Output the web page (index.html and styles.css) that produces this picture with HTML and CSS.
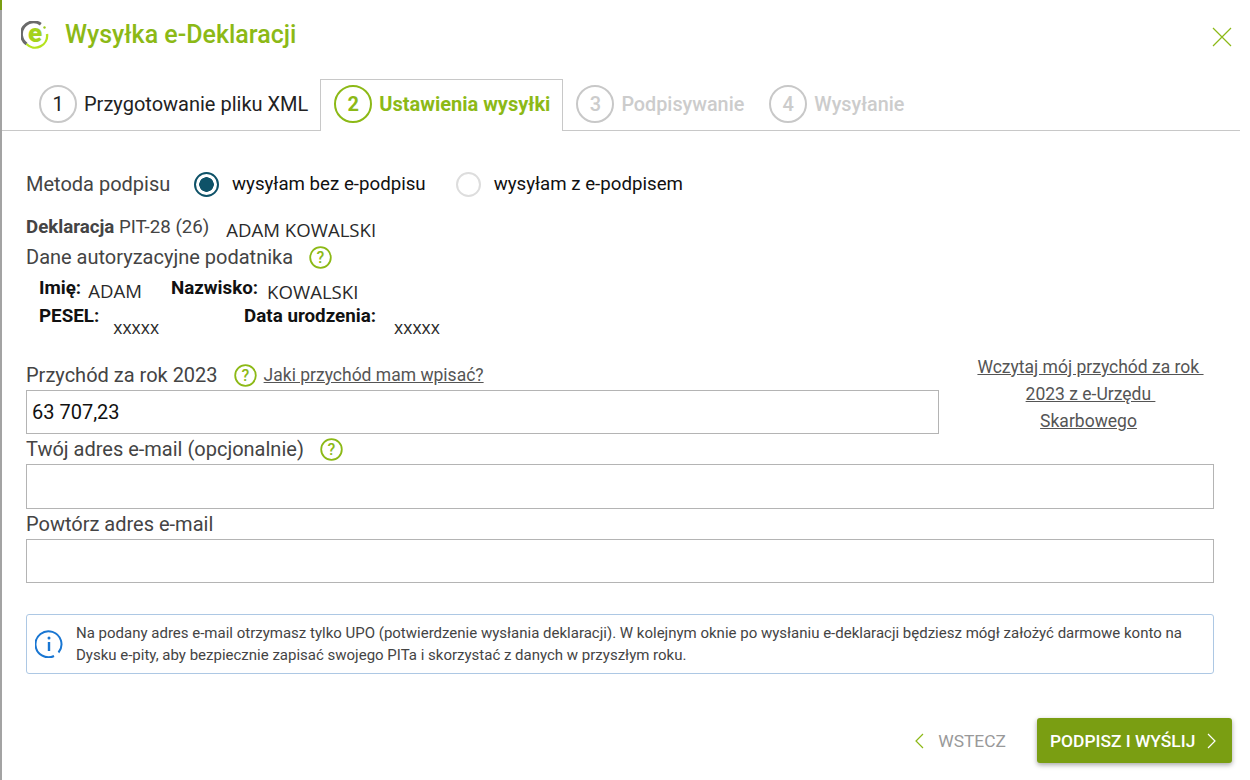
FILE: index.html
```html
<!DOCTYPE html>
<html lang="pl">
<head>
  <meta charset="UTF-8" />
  <title>Wysyłka e-Deklaracji</title>
  <link rel="stylesheet" href="styles.css">
</head>
<body>
  <div class="dialog">

    <div class="header">
      <div class="logo">
        <svg width="28" height="28" viewBox="0 0 28 28" fill="none">
          <path d="M19.800 3.200A12 12 0 1 0 5.500 23" stroke="#6a6a6a" stroke-width="3"/>
          <path d="M5.500 23A12 12 0 0 0 26 13" stroke="#b5e31e" stroke-width="2.400"/>
          <circle cx="23.500" cy="6.500" r="1.200" fill="#9ccb1e"/>
        </svg>
        <span class="logo-e">e</span>
      </div>
      <h1>Wysyłka e-Deklaracji</h1>
      <svg class="close" width="20" height="20" viewBox="0 0 20 20">
        <path d="M1 1l18 18M19 1L1 19" stroke="#8cb916" stroke-width="1.200"/>
      </svg>
    </div>

    <div class="tabs">
      <div class="tab done"><span class="num">1</span>Przygotowanie pliku XML</div>
      <div class="tab active"><span class="num">2</span>Ustawienia wysyłki</div>
      <div class="tab off"><span class="num">3</span>Podpisywanie</div>
      <div class="tab off"><span class="num">4</span>Wysyłanie</div>
    </div>

    <form class="content">
      <div class="method">
        <span class="method-label">Metoda podpisu</span>
        <span class="radio checked"></span>
        <span class="radio-text">wysyłam bez e-podpisu</span>
        <span class="radio"></span>
        <span class="radio-text">wysyłam z e-podpisem</span>
      </div>

      <div class="decl">
        <span><b>Deklaracja</b> PIT-28 (26)</span>
        <span class="pasted decl-name">ADAM KOWALSKI</span>
      </div>

      <div class="auth-title">
        Dane autoryzacyjne podatnika
        <svg class="help" viewBox="0 0 23 23"><circle cx="11.500" cy="11.500" r="10.300"/><text x="11.500" y="17">?</text></svg>
      </div>

      <div class="person">
        <div class="person-row first">
          <b class="f-name">Imię:</b><span class="pasted v-name">ADAM</span>
          <b class="f-surname">Nazwisko:</b><span class="pasted v-surname">KOWALSKI</span>
        </div>
        <div class="person-row second">
          <b class="f-pesel">PESEL:</b><span class="pasted small v-pesel">xxxxx</span>
          <b class="f-birth">Data urodzenia:</b><span class="pasted small v-birth">xxxxx</span>
        </div>
      </div>

      <div class="income">
        <div class="income-main">
          <label class="field-label first-label">
            Przychód za rok 2023
            <svg class="help" viewBox="0 0 23 23"><circle cx="11.500" cy="11.500" r="10.300"/><text x="11.500" y="17">?</text></svg>
            <a class="link what" href="#">Jaki przychód mam wpisać?</a>
          </label>
          <input class="text-input" type="text" value="63 707,23">
        </div>
        <div class="load">
          <a class="link load-line" href="#">Wczytaj mój przychód za rok&nbsp;</a><br>
          <a class="link load-line" href="#">2023 z e-Urzędu&nbsp;</a><br>
          <a class="link" href="#">Skarbowego</a>
        </div>
      </div>

      <label class="field-label email">
        Twój adres e-mail (opcjonalnie)
        <svg class="help" viewBox="0 0 23 23"><circle cx="11.500" cy="11.500" r="10.300"/><text x="11.500" y="17">?</text></svg>
      </label>
      <input class="text-input tall" type="text">

      <label class="field-label email">Powtórz adres e-mail</label>
      <input class="text-input" type="text">

      <div class="info">
        <svg class="info-icon" width="28" height="28" viewBox="0 0 28 28" fill="none">
          <path d="M23.500 22.500A13 13 0 1 0 19 26" stroke="#1976d2" stroke-width="2"/>
          <path d="M14 12v9" stroke="#1976d2" stroke-width="2.400"/>
          <circle cx="14" cy="8" r="1.500" fill="#1976d2"/>
        </svg>
        <p>Na podany adres e-mail otrzymasz tylko UPO (potwierdzenie wysłania deklaracji). W kolejnym oknie po wysłaniu e-deklaracji będziesz mógł założyć darmowe konto na Dysku e-pity, aby bezpiecznie zapisać swojego PITa i skorzystać z danych w przyszłym roku.</p>
      </div>
    </form>

    <div class="actions">
      <button type="button" class="btn-back">
        <svg width="9" height="16" viewBox="0 0 9 16" fill="none"><path d="M8 1L1 8l7 7" stroke="#8cb916" stroke-width="1.200"/></svg>
        WSTECZ
      </button>
      <button type="button" class="btn-next">
        PODPISZ I WYŚLIJ
        <svg width="9" height="16" viewBox="0 0 9 16" fill="none"><path d="M1 1l7 7-7 7" stroke="#fff" stroke-width="1.200"/></svg>
      </button>
    </div>

  </div>
</body>
</html>
```

FILE: styles.css
```css
:root {
  --zielony: #8cb916;
  --ziemny: #7a9e12;
  --szary-linia: #c8c8c8;
  --szary-input: #b4b4b4;
  --tekst: #444;
}

* {
  box-sizing: border-box;
}

html, body {
  margin: 0;
  height: 100%;
  background: white;
}

body {
  font-family: Roboto, sans-serif;
  color: var(--tekst);
  overflow: hidden;
}

.dialog {
  position: relative;
  width: 1240px;
  height: 780px;
  border-left: 2px solid #a3a3a3;
}

.dialog::before {
  content: "";
  position: absolute;
  left: -2px;
  top: 0;
  width: 2px;
  height: 10px;
  background: #7a9e12;
}

/* naglowek */
.header {
  display: flex;
  align-items: center;
  height: 70px;
  padding-left: 19px;
  padding-bottom: 1px;
}

.logo {
  position: relative;
  flex: none;
  width: 28px;
  height: 28px;
}

.logo svg {
  display: block;
}

.logo-e {
  position: absolute;
  left: 0;
  top: -3px;
  width: 28px;
  text-align: center;
  font-size: 26px;
  font-weight: 900;
  line-height: 30px;
  color: #a4d21c;
}

.header h1 {
  margin: 0 0 0 16px;
  font-size: 25px;
  font-weight: 500;
  color: var(--zielony);
}

.close {
  margin-left: auto;
  margin-right: 8px;
  margin-top: 4px;
}

/* zakladki */
.tabs {
  display: flex;
  height: 61px;
  padding-left: 18px;
  border-bottom: 1px solid var(--szary-linia);
}

.tab {
  display: flex;
  align-items: center;
  height: 52px;
  margin-top: 9px;
  padding: 0 12px 3px;
  border: 1px solid transparent;
  border-bottom: none;
  font-size: 20px;
  color: #222;
}

.tab.done {
  padding-left: 18px;
  padding-right: 11px;
}

.num {
  display: flex;
  align-items: center;
  justify-content: center;
  width: 38px;
  height: 38px;
  margin-right: 7px;
  border: 2px solid var(--szary-linia);
  border-radius: 50%;
  font-size: 20px;
}

.tab.active {
  position: relative;
  height: 52px;
  padding: 0 12px 3px 13px;
  background: white;
  border-color: var(--szary-linia);
  font-weight: 700;
  color: var(--zielony);
}

.tab.off {
  padding-right: 11px;
  font-size: 19.800px;
  font-weight: 500;
  color: #ccc;
}

.tab.active .num {
  border-color: var(--zielony);
}

/* formularz */
.content {
  padding: 0 26px 0 24px;
}

.method {
  display: flex;
  align-items: center;
  height: 26px;
  margin-top: 40px;
  font-size: 18.700px;
}

.method-label {
  width: 168px;
  font-size: 20px;
}

.radio {
  width: 25px;
  height: 25px;
  border: 2px solid #ddd;
  border-radius: 50%;
  margin-right: 13px;
}

.radio.checked {
  border-color: #0e5268;
  background: radial-gradient(circle, #0e5268 0 7px, white 7.500px);
}

.radio-text {
  margin-right: 30px;
  color: #111;
}

.decl {
  display: flex;
  height: 23px;
  margin-top: 19px;
  font-size: 18.700px;
}

.decl b {
  font-weight: 700;
}

.pasted {
  font-family: "Open Sans", sans-serif;
  color: #2a2a2a;
  font-size: 18.600px;
}

.pasted.small {
  font-size: 17.500px;
}

.decl-name {
  margin-left: 17px;
  margin-top: 1px;
}

.auth-title {
  display: flex;
  align-items: center;
  height: 24px;
  margin-top: 6px;
  font-size: 20px;
}

.help {
  flex: none;
  width: 23px;
  height: 23px;
  margin-left: 16px;
}

.help circle {
  fill: none;
  stroke: var(--zielony);
  stroke-width: 1.800;
}

.help text {
  font: 500 16px Roboto, sans-serif;
  fill: var(--zielony);
  text-anchor: middle;
}

.person {
  padding-left: 13px;
  font-size: 18.800px;
  color: #111;
}

.person b {
  font-weight: 700;
}

.person-row {
  display: flex;
  height: 28px;
}

.person-row.first {
  margin-top: 8px;
}

.person-row.second {
  height: 29px;
}

.v-name { margin-left: 7px; margin-top: 1px; }
.f-surname { margin-left: 29px; }
.v-surname { margin-left: 9px; margin-top: 2px; }
.v-pesel { margin-left: 14px; margin-top: 10px; }
.f-birth { margin-left: 85px; }
.v-birth { margin-left: 18px; margin-top: 10px; }

.income {
  display: flex;
  margin-top: 28px;
}

.income-main {
  width: 913px;
  flex: none;
}

.field-label {
  display: flex;
  align-items: center;
  height: 28px;
  font-size: 20px;
}

.field-label.first-label {
  padding-bottom: 2px;
}

.field-label.email {
  height: 30px;
}

.text-input {
  display: block;
  width: 100%;
  height: 44px;
  padding: 0 5px;
  border: 1px solid var(--szary-input);
  font: 20px Roboto, sans-serif;
  color: #111;
  outline: none;
}

.text-input.tall {
  height: 45px;
}

.link {
  color: #555;
  text-decoration: underline;
}

.what {
  margin-left: 7px;
  font-size: 17.500px;
}

.load {
  flex: none;
  width: 299px;
  margin: -8px -24px -1px 0;
  text-align: center;
  font-size: 17.500px;
  line-height: 27px;
}

.load-line {
  margin-left: 4px;
}

/* komunikat */
.info {
  display: flex;
  align-items: center;
  height: 60px;
  margin-top: 31px;
  padding: 0 12px 0 8px;
  border: 1px solid #adc8e4;
  border-radius: 3px;
}

.info-icon {
  flex: none;
  margin-right: 13px;
}

.info p {
  margin: 0;
  font-size: 15px;
  line-height: 22px;
  color: #444;
}

/* przyciski */
.actions {
  display: flex;
  align-items: center;
  justify-content: flex-end;
  margin-top: 44px;
  padding-right: 8px;
}

.btn-back, .btn-next {
  display: flex;
  align-items: center;
  border: none;
  font-family: Roboto, sans-serif;
  font-size: 17.400px;
  font-weight: 500;
  cursor: pointer;
}

.btn-back {
  gap: 14px;
  margin-right: 31px;
  padding: 0;
  background: none;
  color: #999;
  font-weight: 400;
}

.btn-next {
  justify-content: space-between;
  width: 195px;
  height: 45px;
  padding: 0 16px 0 13px;
  background: var(--ziemny);
  border-radius: 3px;
  box-shadow: 0 2px 5px rgba(0, 0, 0, 0.35);
  color: white;
}
```
